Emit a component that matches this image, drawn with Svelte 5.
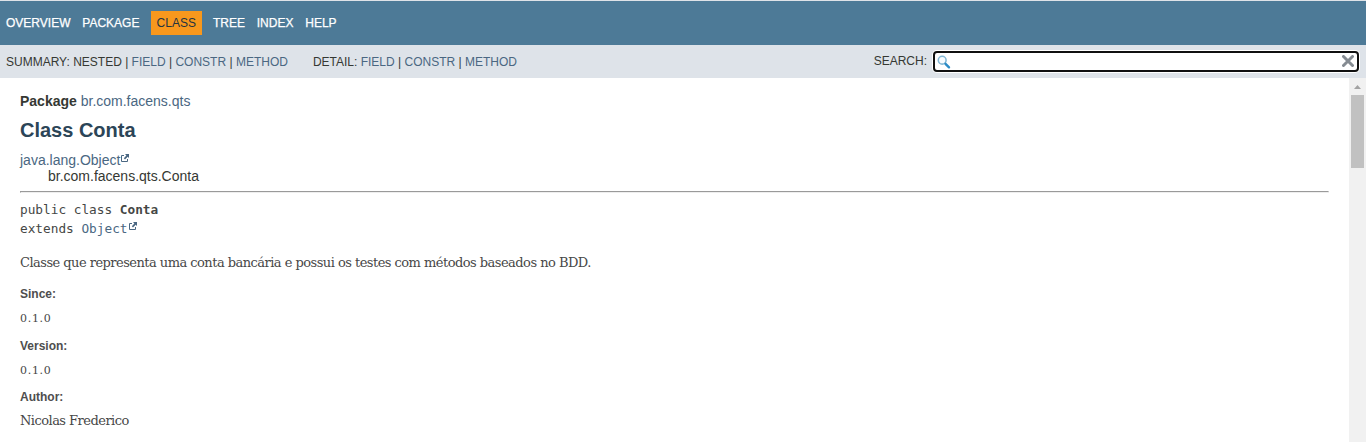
<script>
  const summary = ['FIELD', 'CONSTR', 'METHOD'];
  const notes = [
    { label: 'Since:', value: '0.1.0', kind: 'since' },
    { label: 'Version:', value: '0.1.0', kind: 'version' },
    { label: 'Author:', value: 'Nicolas Frederico', kind: 'author' }
  ];
</script>

{#snippet external()}
  <svg class="ext" viewBox="0 0 8 8" width="8" height="8" aria-hidden="true">
    <path d="M3 1.5H.5v6h6V5" fill="none" stroke="#4a6782" stroke-width="1" />
    <path d="M4 0h4v4L6.7 2.7 4 5.4 2.8 4.2l2.6-2.7z" fill="#4a6782" />
  </svg>
{/snippet}

<div class="page">
  <nav class="top">
    <a href="#overview">OVERVIEW</a>
    <a href="#package">PACKAGE</a>
    <span class="active">CLASS</span>
    <a href="#tree">TREE</a>
    <a href="#index">INDEX</a>
    <a href="#help">HELP</a>
  </nav>
  <div class="sub">
    <div class="list">SUMMARY: NESTED{#each summary as s}{' | '}<a href="#{s}">{s}</a>{/each}</div>
    <div class="list detail">DETAIL: {#each summary as s, i}{i ? ' | ' : ''}<a href="#{s}">{s}</a>{/each}</div>
    <div class="search">
      <span>SEARCH:</span>
      <div class="field">
        <svg width="14" height="14" viewBox="0 0 14 14">
          <circle cx="5.2" cy="5.2" r="3.9" fill="#f8fcff" stroke="#83b8d5" stroke-width="1.6" />
          <path d="m8.5 8.8 3.5 3.5" stroke="#2b8bc6" stroke-width="2.4" stroke-linecap="round" />
        </svg>
        <svg width="12" height="12" viewBox="0 0 12 12">
          <path d="m1.5 1.5 9 9m0-9-9 9" stroke="#858b92" stroke-width="3" stroke-linecap="round" />
        </svg>
      </div>
    </div>
  </div>
  <div class="body">
    <main>
      <div class="package"><b>Package</b> <a href="#pkg">br.com.facens.qts</a></div>
      <h1>Class Conta</h1>
      <div class="tree"><a href="#object">java.lang.Object{@render external()}</a></div>
      <div class="tree child">br.com.facens.qts.Conta</div>
      <hr />
      <div class="code">public class <b>Conta</b></div>
      <div class="code">extends <a href="#object">Object{@render external()}</a></div>
      <p>Classe que representa uma conta bancária e possui os testes com métodos baseados no BDD.</p>
      <dl>
        {#each notes as n}
          <dt class={n.kind}>{n.label}</dt>
          <dd class={n.kind}>{n.value}</dd>
        {/each}
      </dl>
    </main>
    <div class="bar">
      <svg width="17" height="17" viewBox="0 0 17 17"><path d="M5 11h7L8.5 7z" fill="#a3a3a3" /></svg>
      <div class="thumb"></div>
    </div>
  </div>
</div>

<style>
  .page {
    width: 1366px;
    height: 442px;
    overflow: hidden;
    display: flex;
    flex-direction: column;
    background: #fff;
    color: #353833;
    font-family: "Liberation Sans", Arial, sans-serif;
    font-size: 14px;
  }
  a { color: #4a6782; text-decoration: none; }
  .top {
    box-sizing: border-box;
    height: 45px;
    border-top: 1px solid #dfe3e8;
    background: #4d7a97;
    display: flex;
    align-items: center;
    padding-left: 6px;
    font-size: 12px;
  }
  .top a { color: #fff; margin-right: 11.8px; -webkit-text-stroke: 0.25px #fff; }
  .active {
    background: #f8981d;
    color: #253441;
    height: 24px;
    line-height: 24px;
    padding: 0 6px;
    margin-left: -0.6px;
    margin-right: 11px;
  }
  .sub {
    height: 33px;
    background: #dee3e9;
    display: flex;
    align-items: center;
    padding-left: 6px;
    font-size: 12px;
  }
  .list { white-space: pre; }
  .detail { margin-left: 25px; }
  .search {
    margin-left: auto;
    margin-right: 7px;
    display: flex;
    align-items: center;
    gap: 6px;
    padding-bottom: 1px;
  }
  .field {
    box-sizing: border-box;
    width: 426px;
    height: 21px;
    border: 2px solid #101010;
    border-radius: 4px;
    box-shadow: 0 0 0 1px #fff;
    background: #fff;
    display: flex;
    align-items: center;
    justify-content: space-between;
    padding: 0 3px 0 2px;
  }
  .field svg:first-child { margin-top: 1px; }
  .body { flex: 1; display: flex; min-height: 0; }
  main { width: 1309px; padding: 13px 20px 0; }
  .package { height: 20px; line-height: 20px; }
  h1 { margin: 6px 0 0; height: 26px; line-height: 26px; font-size: 20px; color: #2c4557; }
  .tree { height: 16px; line-height: 16px; }
  h1 + .tree { margin-top: 9px; }
  .child { padding-left: 28px; }
  .ext { margin-left: 1px; vertical-align: 3px; }
  .code .ext { margin-left: 2px; }
  hr { margin: 7px 0 0; border: 1px solid; border-color: #9a9a9a #eee #eee #9a9a9a; height: 0; }
  .code { height: 19px; line-height: 19px; font-family: "DejaVu Sans Mono", monospace; font-size: 12.75px; color: #454745; }
  hr + .code { margin-top: 7px; }
  p, dd { font-family: "DejaVu Serif", Georgia, serif; color: #474747; }
  p {
    margin: 15px 0 0;
    height: 20px;
    line-height: 20px;
    font-size: 13px;
    letter-spacing: -0.53px;
    white-space: nowrap;
  }
  dl { margin: 13px 0 0; }
  dt { height: 17px; line-height: 17px; font-size: 12px; font-weight: bold; color: #4e4e4e; }
  dd { margin: 0; height: 20px; line-height: 20px; font-size: 13px; letter-spacing: -0.53px; }
  dd.since, dd.version { font-size: 11px; letter-spacing: 0.7px; margin: 6px 0 9px; }
  dd.version { margin-bottom: 8px; }
  dd.author { margin-top: 5px; }
  .bar { width: 17px; background: #f1f1f1; }
  .bar svg { display: block; }
  .thumb { width: 13px; height: 73px; margin-left: 2px; background: #c1c1c1; }
</style>
